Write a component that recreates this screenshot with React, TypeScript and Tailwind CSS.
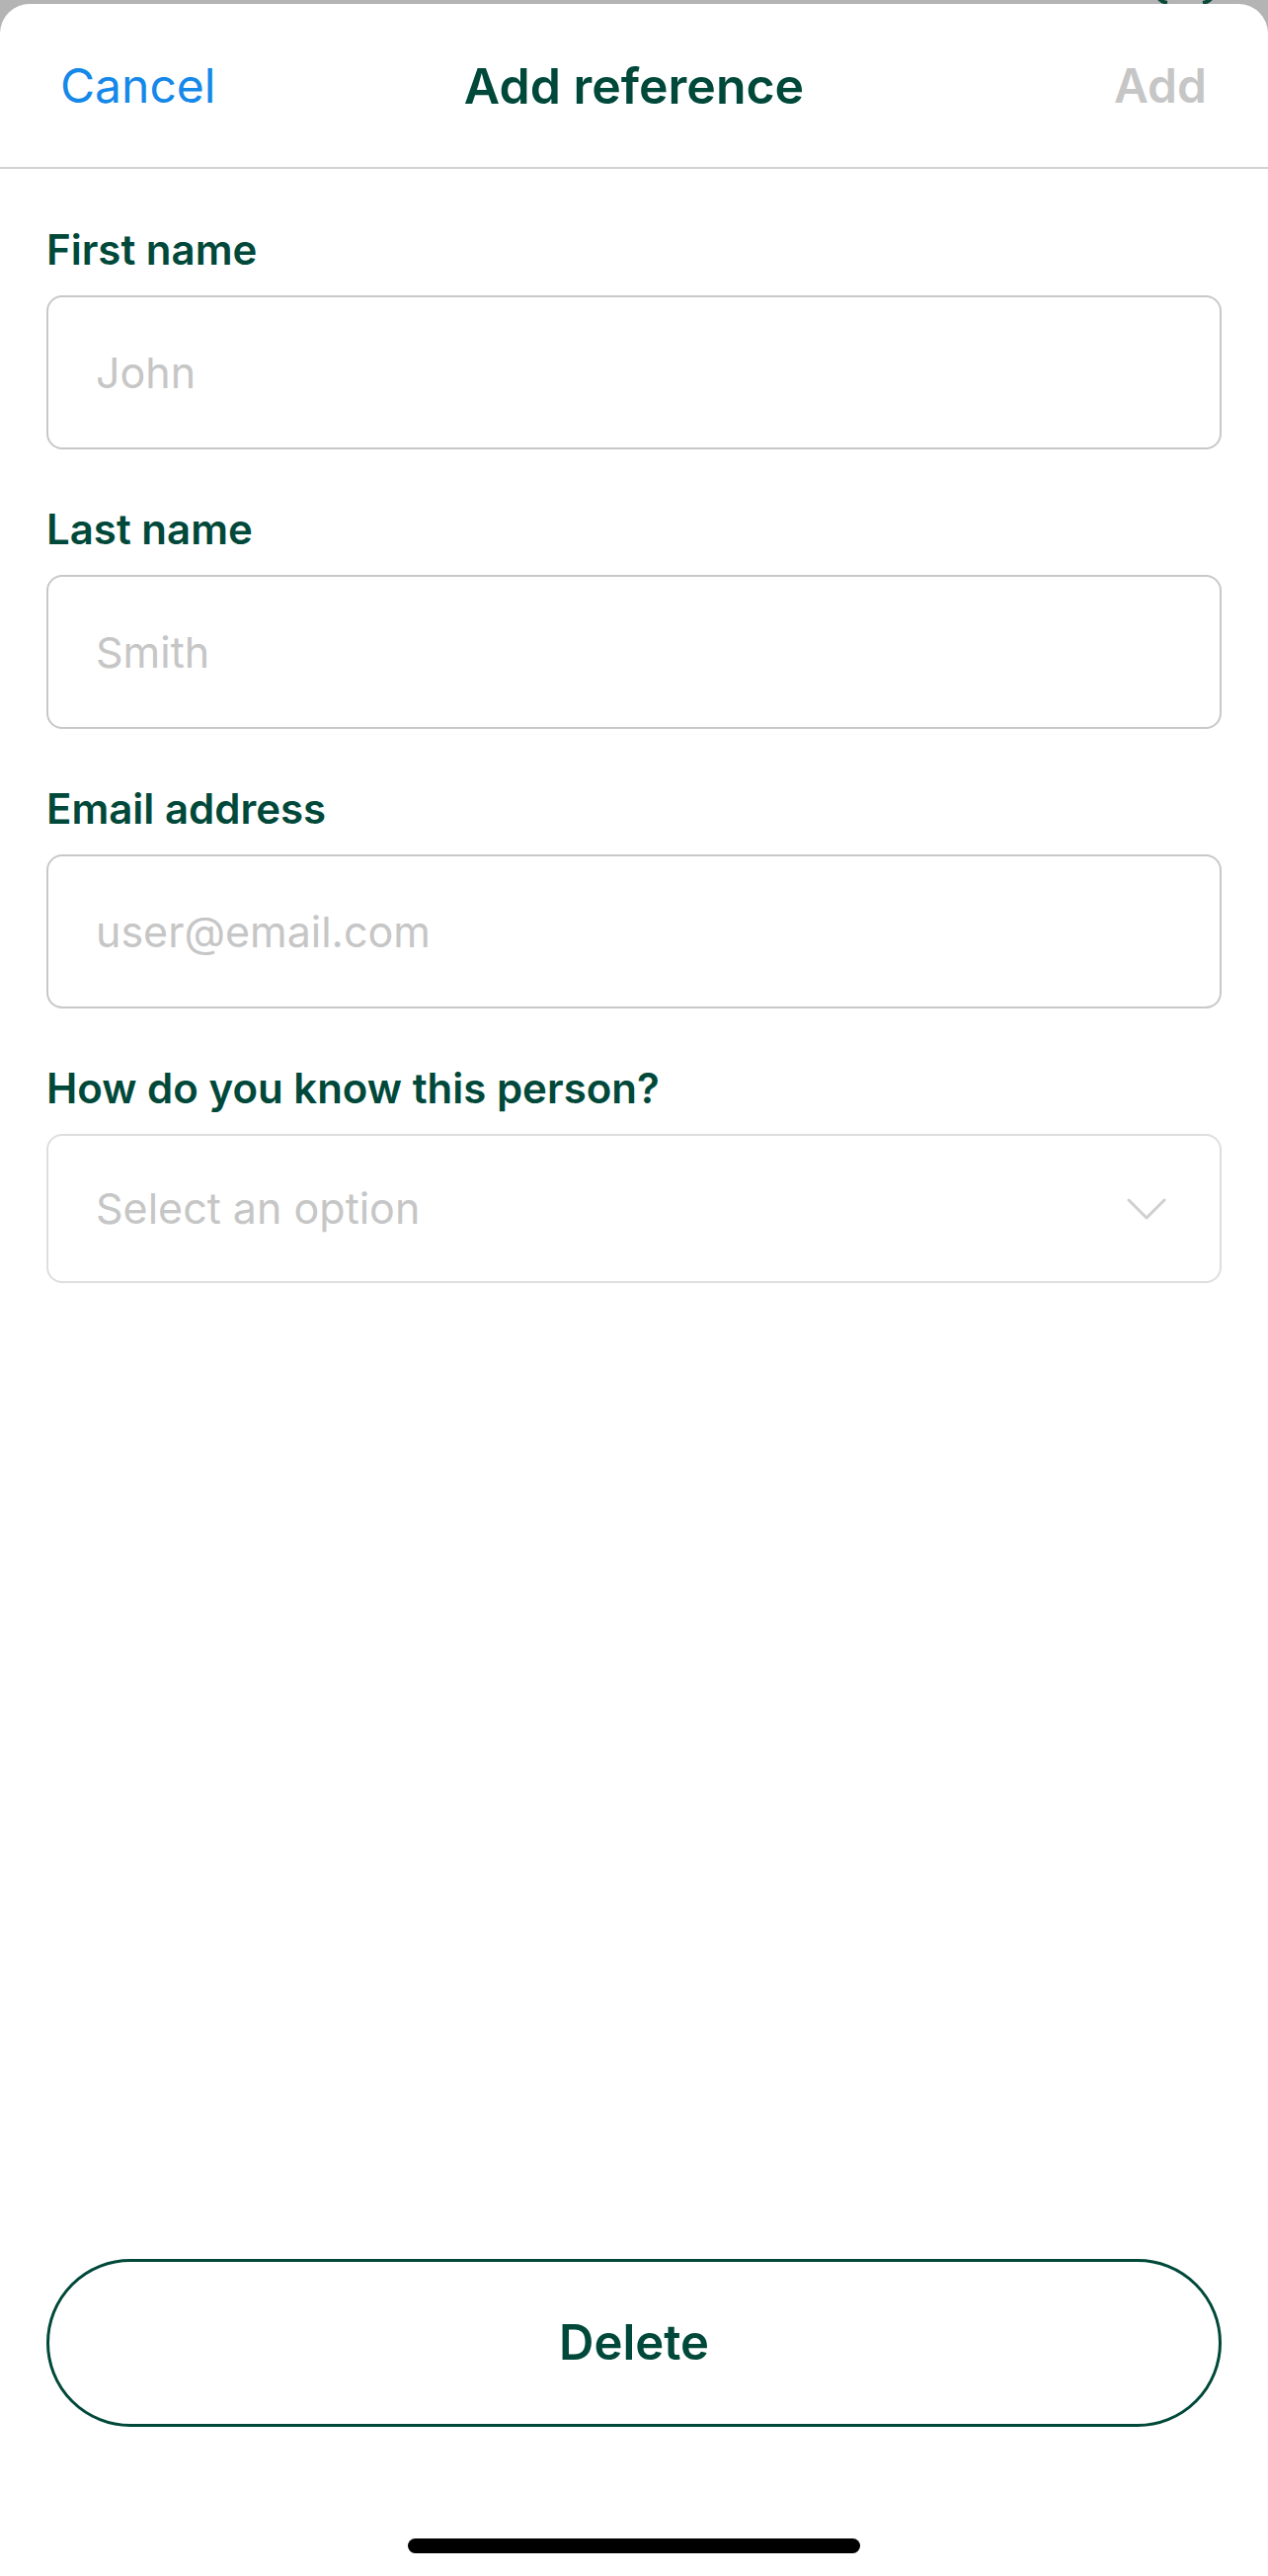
import { useState } from 'react';

const fields = [
  { id: 'first', label: 'First name', placeholder: 'John', type: 'text' },
  { id: 'last', label: 'Last name', placeholder: 'Smith', type: 'text' },
  { id: 'email', label: 'Email address', placeholder: 'user@email.com', type: 'email' },
];

function ChevronDown() {
  return (
    <svg width="40" height="24" viewBox="0 0 40 24" fill="none">
      <polyline points="2,3 20,21 38,3" stroke="#cfcfcf" strokeWidth="3" strokeLinecap="round" strokeLinejoin="round" />
    </svg>
  );
}

export default function App() {
  const [values, setValues] = useState<Record<string, string>>({});

  return (
    <div className="relative h-[2608px] bg-[#b4b4b4] pt-[4px] flex flex-col font-['Inter',sans-serif] overflow-hidden">
      {/* bit of the screen underneath the sheet */}
      <svg className="absolute top-[-8px] left-[1164px]" width="72" height="14" viewBox="0 0 72 14" fill="none">
        <path d="M6 0 C8 6 12 10 18 11" stroke="#0b4a38" strokeWidth="4" />
        <path d="M66 0 C64 6 60 10 54 11" stroke="#0b4a38" strokeWidth="4" />
      </svg>

      <div className="relative flex-1 bg-white rounded-t-[30px] flex flex-col">
        <header className="h-[167px] flex items-center justify-between pl-[61px] pr-[62px] border-b-2 border-[#d2d2d2] relative">
          <button className="text-[48px] text-[#1588e8] leading-none">Cancel</button>
          <h1 className="absolute left-0 right-0 text-center text-[50px] font-semibold text-[#00493a] leading-none pointer-events-none">
            Add reference
          </h1>
          <button className="text-[48px] font-semibold text-[#c6c6c6] leading-none">Add</button>
        </header>

        <main className="flex-1 flex flex-col px-[47px] pt-[57px]">
          <div className="flex flex-col gap-[56px]">
            {fields.map(f => (
              <div key={f.id} className="flex flex-col gap-[21px]">
                <label htmlFor={f.id} className="text-[42px] leading-[50px] font-semibold text-[#00493a]">
                  {f.label}
                </label>
                <input
                  id={f.id}
                  type={f.type}
                  value={values[f.id] || ''}
                  onChange={e => setValues({ ...values, [f.id]: e.target.value })}
                  placeholder={f.placeholder}
                  className="h-[156px] w-full rounded-[16px] border-2 border-[#c8c8c8] pl-[48px] pr-[40px] text-[43px] text-[#1f1f1f] placeholder:text-[#c6c6c6] outline-none"
                />
              </div>
            ))}

            <div className="flex flex-col gap-[21px]">
              <label className="text-[42px] leading-[50px] font-semibold text-[#00493a]">
                How do you know this person?
              </label>
              <button className="h-[151px] w-full rounded-[16px] border-2 border-[#dedede] pl-[48px] pr-[54px] flex items-center justify-between">
                <span className="text-[43px] text-[#c6c6c6]">Select an option</span>
                <ChevronDown />
              </button>
            </div>
          </div>

          <button className="mt-auto h-[170px] w-full rounded-full border-[3px] border-[#00493a] text-[49px] font-semibold text-[#00493a]">
            Delete
          </button>

          <div className="mt-[113px] mb-[23px] self-center w-[458px] h-[15px] rounded-full bg-black" />
        </main>
      </div>
    </div>
  );
}
